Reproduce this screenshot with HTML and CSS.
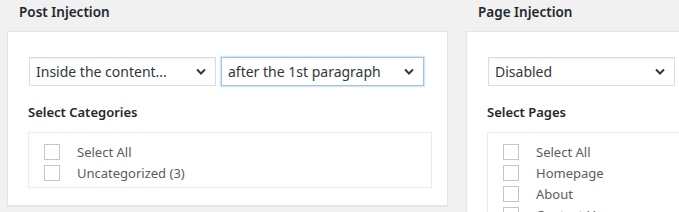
FILE: index.html
```html
<!DOCTYPE html>
<html>
<head>
<meta charset="utf-8">
<link rel="stylesheet" href="styles.css">
</head>
<body>
<div class="wrap">
  <section class="col">
    <h2 class="title">Post Injection</h2>
    <div class="panel">
      <div class="selects">
        <div class="sel w1"><span>Inside the content...</span><svg class="chev" width="10" height="7" viewBox="0 0 10 7"><path d="M1 1.5 L5 5.5 L9 1.5" fill="none" stroke="#32373c" stroke-width="2"/></svg></div>
        <div class="sel w2 focus"><span>after the 1st paragraph</span><svg class="chev" width="10" height="7" viewBox="0 0 10 7"><path d="M1 1.5 L5 5.5 L9 1.5" fill="none" stroke="#32373c" stroke-width="2"/></svg></div>
      </div>
      <div class="label">Select Categories</div>
      <div class="list">
        <div class="row"><span class="cb"></span><span>Select All</span></div>
        <div class="row"><span class="cb"></span><span>Uncategorized (3)</span></div>
      </div>
    </div>
  </section>
  <section class="col">
    <h2 class="title">Page Injection</h2>
    <div class="panel">
      <div class="selects">
        <div class="sel w1"><span>Disabled</span><svg class="chev" width="10" height="7" viewBox="0 0 10 7"><path d="M1 1.5 L5 5.5 L9 1.5" fill="none" stroke="#32373c" stroke-width="2"/></svg></div>
      </div>
      <div class="label">Select Pages</div>
      <div class="list">
        <div class="row"><span class="cb"></span><span>Select All</span></div>
        <div class="row"><span class="cb"></span><span>Homepage</span></div>
        <div class="row"><span class="cb"></span><span>About</span></div>
        <div class="row"><span class="cb"></span><span>Contact Us</span></div>
      </div>
    </div>
  </section>
</div>
</body>
</html>
```
FILE: styles.css
```css
html, body {
  margin: 0;
  padding: 0;
  background: #f1f1f1;
  overflow: hidden;
  height: 212px;
}
body {
  font-family: "Noto Sans", "Open Sans", sans-serif;
  color: #32373c;
}
.wrap {
  display: flex;
  gap: 18px;
  padding-left: 7px;
  width: 1000px;
}
.col {
  width: 441px;
  flex: none;
}
.title {
  margin: 0;
  height: 31px;
  box-sizing: border-box;
  padding: 3px 0 0 12px;
  font-size: 13.5px;
  font-weight: 600;
  color: #23282d;
  line-height: 19px;
}
.panel {
  background: #fff;
  border: 1px solid #e5e5e5;
  box-shadow: 0 1px 1px rgba(0,0,0,0.04);
  padding: 25px 15px 20px 21px;
  height: 175px;
  box-sizing: border-box;
}
.col:last-child .panel {
  height: 240px;
}
.selects {
  display: flex;
  gap: 5px;
}
.sel {
  height: 29px;
  box-sizing: border-box;
  border: 1px solid #ddd;
  box-shadow: inset 0 1px 2px rgba(0,0,0,0.07);
  display: flex;
  align-items: center;
  justify-content: space-between;
  padding: 0 9px 0 6px;
  font-size: 14px;
  color: #32373c;
}
.w1 { width: 187px; }
.w2 { width: 203px; }
.sel.focus {
  border-color: #9ec4e6;
  box-shadow: 0 0 1px 1px rgba(91,157,217,0.25);
}
.chev { flex: none; }
.label {
  margin: 17px 0 0 -1px;
  font-size: 13px;
  font-weight: 600;
  color: #23282d;
  line-height: 18px;
}
.list {
  margin: 11px 0 0 -1px;
  width: 404px;
  box-sizing: border-box;
  border: 1px solid #ebebeb;
  padding: 8px 0 4px 15px;
}
.row {
  display: flex;
  align-items: center;
  height: 21px;
  font-size: 13px;
  color: #555d66;
}
.cb {
  width: 16px;
  height: 16px;
  box-sizing: border-box;
  border: 1px solid #c3c6c9;
  margin-right: 17px;
  flex: none;
}
```
